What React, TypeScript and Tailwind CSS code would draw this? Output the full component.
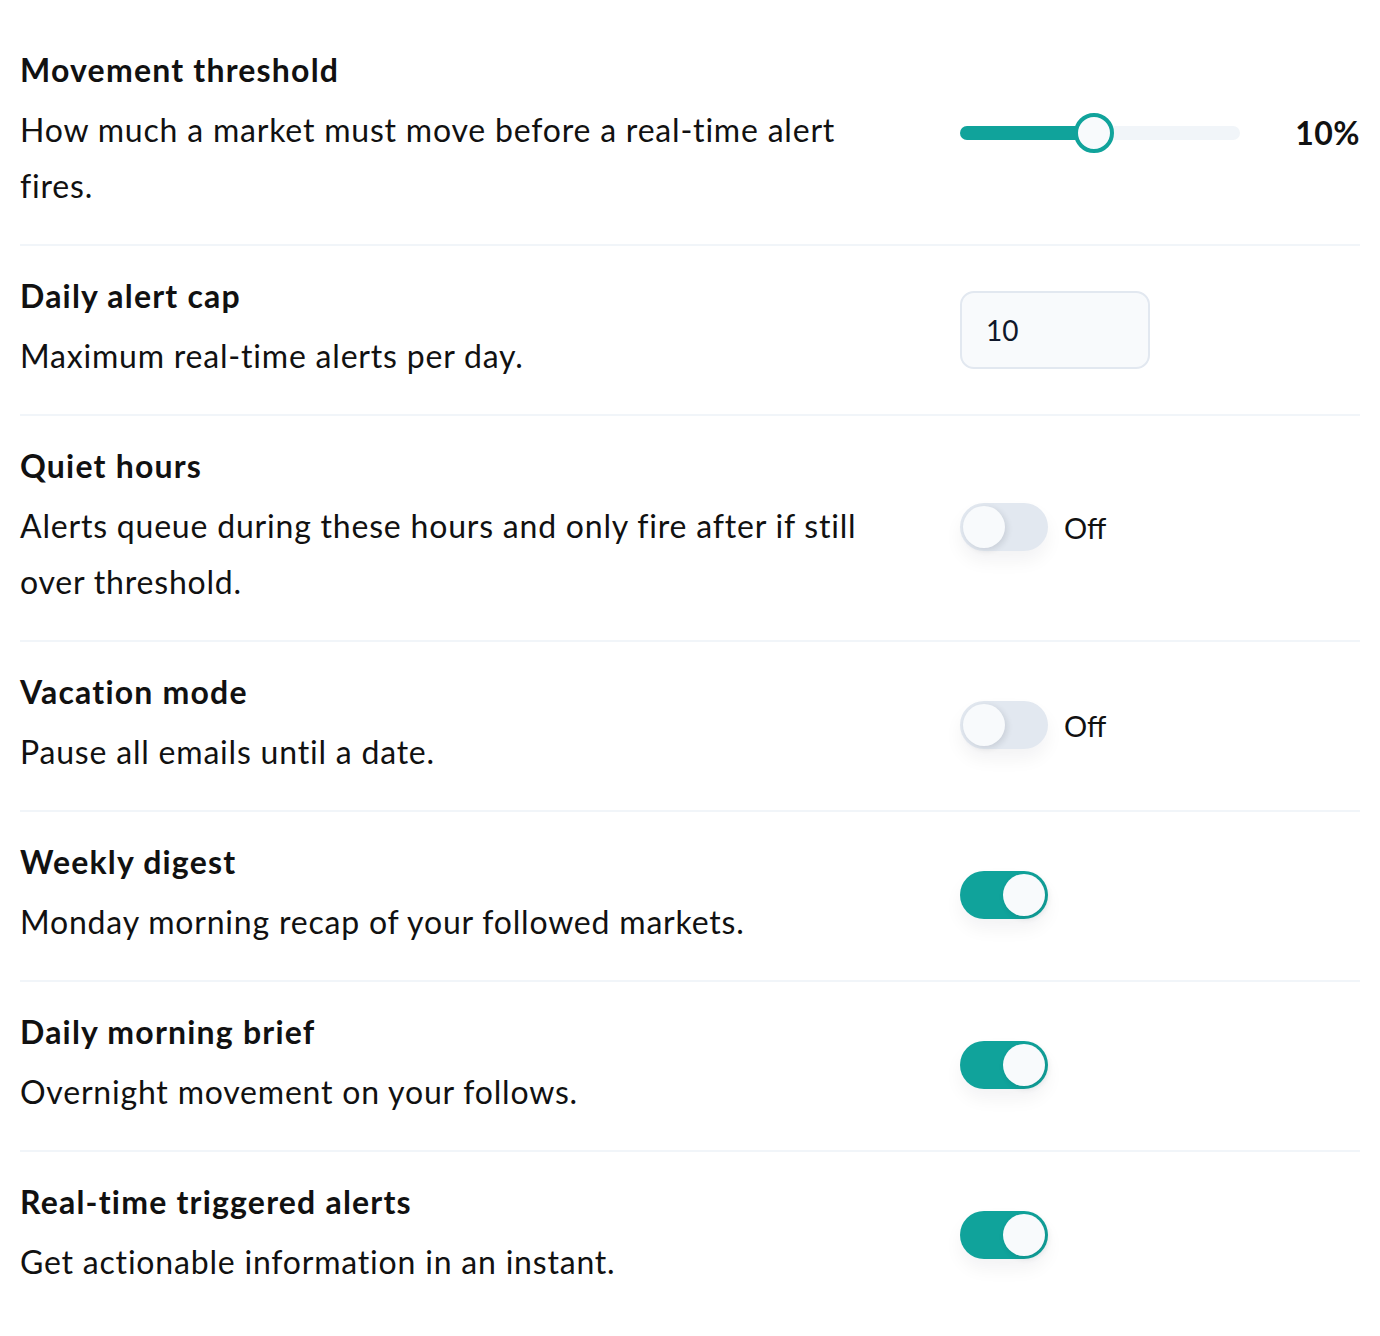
import React, { useState } from 'react';

type Row = {
  title: string;
  description: string;
  control: 'slider' | 'number' | 'toggle';
  on?: boolean;
  showLabel?: boolean;
};

const rows: Row[] = [
  {
    title: 'Movement threshold',
    description: 'How much a market must move before a real-time alert fires.',
    control: 'slider',
  },
  {
    title: 'Daily alert cap',
    description: 'Maximum real-time alerts per day.',
    control: 'number',
  },
  {
    title: 'Quiet hours',
    description: 'Alerts queue during these hours and only fire after if still over threshold.',
    control: 'toggle',
    on: false,
    showLabel: true,
  },
  {
    title: 'Vacation mode',
    description: 'Pause all emails until a date.',
    control: 'toggle',
    on: false,
    showLabel: true,
  },
  {
    title: 'Weekly digest',
    description: 'Monday morning recap of your followed markets.',
    control: 'toggle',
    on: true,
  },
  {
    title: 'Daily morning brief',
    description: 'Overnight movement on your follows.',
    control: 'toggle',
    on: true,
  },
  {
    title: 'Real-time triggered alerts',
    description: 'Get actionable information in an instant.',
    control: 'toggle',
    on: true,
  },
];

const Slider: React.FC<{ value: number }> = ({ value }) => {
  // 0..20% range mapped over the track
  const pct = (value / 20) * 100 * 0.96;
  return (
    <div className="mt-[6px] flex w-full items-center">
      <div className="relative h-[14px] w-[280px] rounded-full bg-[#f1f5f9]">
        <div className="h-full rounded-full bg-[#10a39b]" style={{ width: `${pct}%` }} />
        <div
          className="absolute top-1/2 h-[40px] w-[40px] -translate-x-1/2 -translate-y-1/2 rounded-full border-[4px] border-[#10a39b] bg-[#f8fafc]"
          style={{ left: `${pct}%` }}
        />
      </div>
      <span className="ml-auto text-[32px] font-bold leading-none tracking-[0.5px] text-[#111]">{value}%</span>
    </div>
  );
};

const Toggle: React.FC<{ initial: boolean; showLabel?: boolean }> = ({ initial, showLabel }) => {
  const [on, setOn] = useState(initial);
  return (
    <div className="mt-[2px] flex items-center gap-4">
      <button
        type="button"
        onClick={() => setOn(!on)}
        className={`relative h-[48px] w-[88px] rounded-full shadow-[0_10px_18px_rgba(15,23,42,0.05)] ${
          on ? 'bg-[#10a39b]' : 'bg-[#e2e8f0]'
        }`}
      >
        <span
          className={`absolute top-[3px] h-[42px] w-[42px] rounded-full bg-[#f8fafc] shadow-[2px_2px_6px_rgba(15,23,42,0.12)] ${
            on ? 'left-[43px]' : 'left-[3px]'
          }`}
        />
      </button>
      {showLabel && <span className="text-[29px] leading-none text-[#111]">{on ? 'On' : 'Off'}</span>}
    </div>
  );
};

export default function App() {
  return (
    <div
      className="min-h-screen bg-white px-5 pt-5 text-[#111]"
      style={{ fontFamily: 'Lato, "Noto Sans", sans-serif' }}
    >
      {rows.map((row, i) => (
        <div
          key={row.title}
          className={`flex items-center gap-[60px] pt-[26px] pb-[30px] ${
            i < rows.length - 1 ? 'border-b-2 border-[#f1f5f9]' : ''
          }`}
        >
          <div className="flex-1">
            <h3 className="text-[32px] font-bold leading-[48px] tracking-[1.2px]">{row.title}</h3>
            <p className="mt-2 text-[32px] leading-[56px] tracking-[0.8px]">{row.description}</p>
          </div>
          <div className="w-[400px] shrink-0">
            {row.control === 'slider' && <Slider value={10} />}
            {row.control === 'number' && (
              <input
                type="number"
                defaultValue={10}
                className="mt-[4px] h-[78px] w-[190px] rounded-[14px] border-2 border-[#e2e8f0] bg-[#f8fafc] px-[24px] text-[28px] text-[#0f172a] outline-none"
              />
            )}
            {row.control === 'toggle' && <Toggle initial={!!row.on} showLabel={row.showLabel} />}
          </div>
        </div>
      ))}
    </div>
  );
}
